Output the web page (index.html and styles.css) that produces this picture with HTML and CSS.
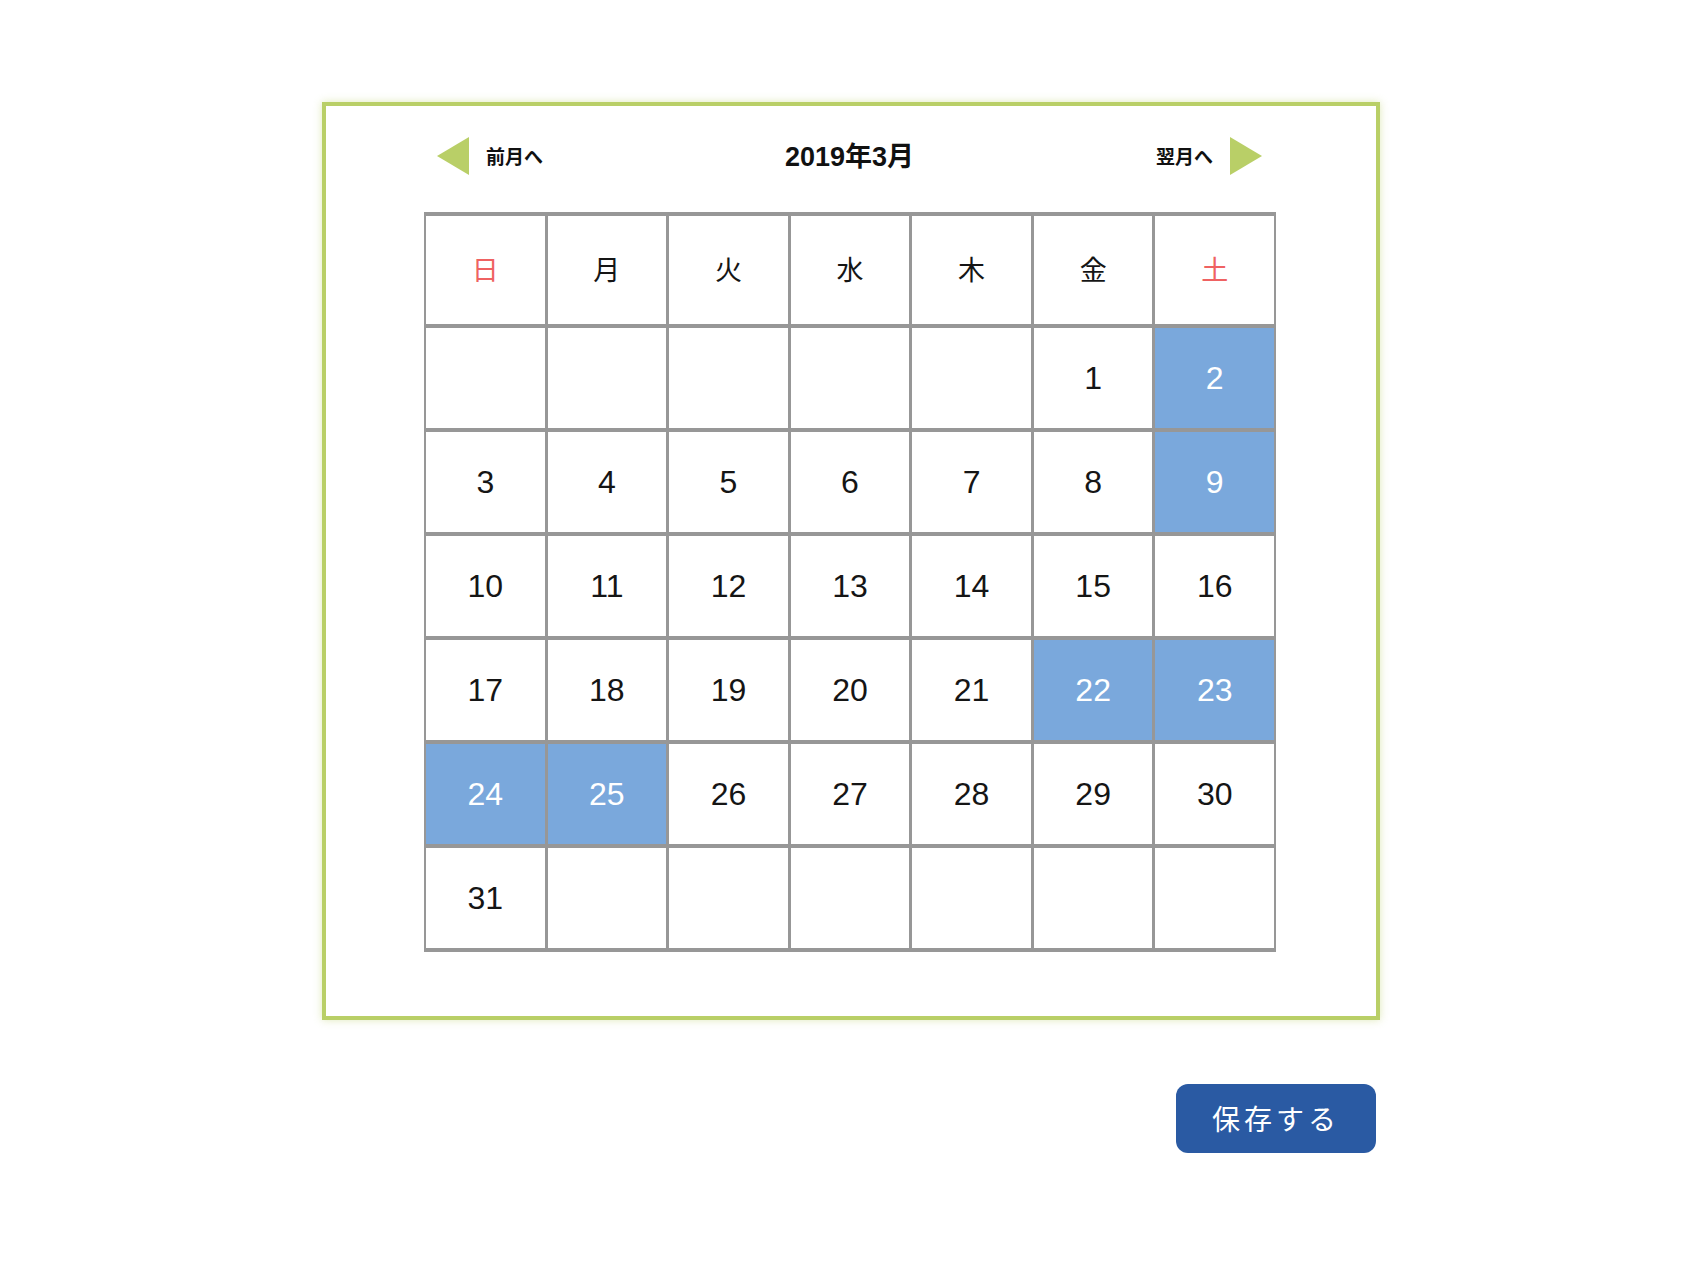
FILE: index.html
```html
<!DOCTYPE html>
<html lang="ja">
<head>
<meta charset="utf-8">
<title>カレンダー</title>
<link rel="stylesheet" href="styles.css">
</head>
<body>
<div class="page">
  <div class="calendar-box">
    <div class="nav">
      <a class="nav-link prev" href="#"><span class="tri tri-left"></span><span class="nav-text">前月へ</span></a>
      <div class="title">2019年3月</div>
      <a class="nav-link next" href="#"><span class="nav-text">翌月へ</span><span class="tri tri-right"></span></a>
    </div>
    <div class="grid">
      <div class="cell head sun">日</div>
      <div class="cell head">月</div>
      <div class="cell head">火</div>
      <div class="cell head">水</div>
      <div class="cell head">木</div>
      <div class="cell head">金</div>
      <div class="cell head sat">土</div>

      <div class="cell"></div><div class="cell"></div><div class="cell"></div><div class="cell"></div><div class="cell"></div>
      <div class="cell">1</div><div class="cell on">2</div>

      <div class="cell">3</div><div class="cell">4</div><div class="cell">5</div><div class="cell">6</div><div class="cell">7</div><div class="cell">8</div><div class="cell on">9</div>

      <div class="cell">10</div><div class="cell">11</div><div class="cell">12</div><div class="cell">13</div><div class="cell">14</div><div class="cell">15</div><div class="cell">16</div>

      <div class="cell">17</div><div class="cell">18</div><div class="cell">19</div><div class="cell">20</div><div class="cell">21</div><div class="cell on">22</div><div class="cell on">23</div>

      <div class="cell on">24</div><div class="cell on">25</div><div class="cell">26</div><div class="cell">27</div><div class="cell">28</div><div class="cell">29</div><div class="cell">30</div>

      <div class="cell">31</div><div class="cell"></div><div class="cell"></div><div class="cell"></div><div class="cell"></div><div class="cell"></div><div class="cell"></div>
    </div>
  </div>
  <div class="actions">
    <button class="save" type="button">保存する</button>
  </div>
</div>
</body>
</html>
```

FILE: styles.css
```css
html, body {
  margin: 0;
  padding: 0;
  background: #ffffff;
}

body {
  font-family: "Liberation Sans", "Noto Sans CJK JP", sans-serif;
  color: #111111;
}

.page {
  width: 1058px;
  margin: 102px 0 0 322px;
}

.calendar-box {
  border: 4px solid #b9cf67;
  box-shadow: 0 0 8px rgba(185, 207, 103, 0.45);
  padding: 31px 100px 64px 98px;
  background: #ffffff;
}

.nav {
  display: grid;
  grid-template-columns: 1fr auto 1fr;
  align-items: center;
  height: 38px;
  padding: 0 14px 0 13px;
  margin-bottom: 37px;
}

.nav-link {
  display: flex;
  align-items: center;
  gap: 17px;
  color: #111111;
  text-decoration: none;
  font-family: "Noto Sans CJK JP", sans-serif;
  font-weight: 700;
  font-size: 19px;
  line-height: 1;
}

.nav-text {
  padding-bottom: 2px;
}

.nav-link.next {
  justify-self: end;
}

.tri {
  display: block;
  width: 0;
  height: 0;
  border-top: 19px solid transparent;
  border-bottom: 19px solid transparent;
}

.tri-left {
  border-right: 32px solid #b9cf67;
}

.tri-right {
  border-left: 32px solid #b9cf67;
}

.title {
  font-weight: 700;
  font-size: 27px;
  line-height: 1;
  padding-top: 3px;
}

.grid {
  display: grid;
  grid-template-columns: repeat(7, 1fr);
  grid-template-rows: 108px repeat(6, 100px);
  gap: 4px 3px;
  padding: 4px 2px;
  background: #979797;
  width: 852px;
  box-sizing: border-box;
}

.cell {
  background: #ffffff;
  display: flex;
  align-items: center;
  justify-content: center;
  font-size: 32px;
  color: #151515;
}

.cell.head {
  font-family: "Noto Sans CJK JP", sans-serif;
  font-size: 27px;
  padding-bottom: 4px;
}

.cell.sun,
.cell.sat {
  color: #ef6262;
}

.cell.on {
  background: #7aa8dc;
  color: #ffffff;
}

.actions {
  display: flex;
  justify-content: flex-end;
  margin-top: 64px;
  padding-right: 4px;
}

.save {
  width: 200px;
  height: 69px;
  border: none;
  border-radius: 12px;
  background: #2a5aa3;
  color: #ffffff;
  font-family: "Noto Sans CJK JP", sans-serif;
  font-size: 28px;
  letter-spacing: 4px;
  padding: 0 0 2px 0;
}
```
